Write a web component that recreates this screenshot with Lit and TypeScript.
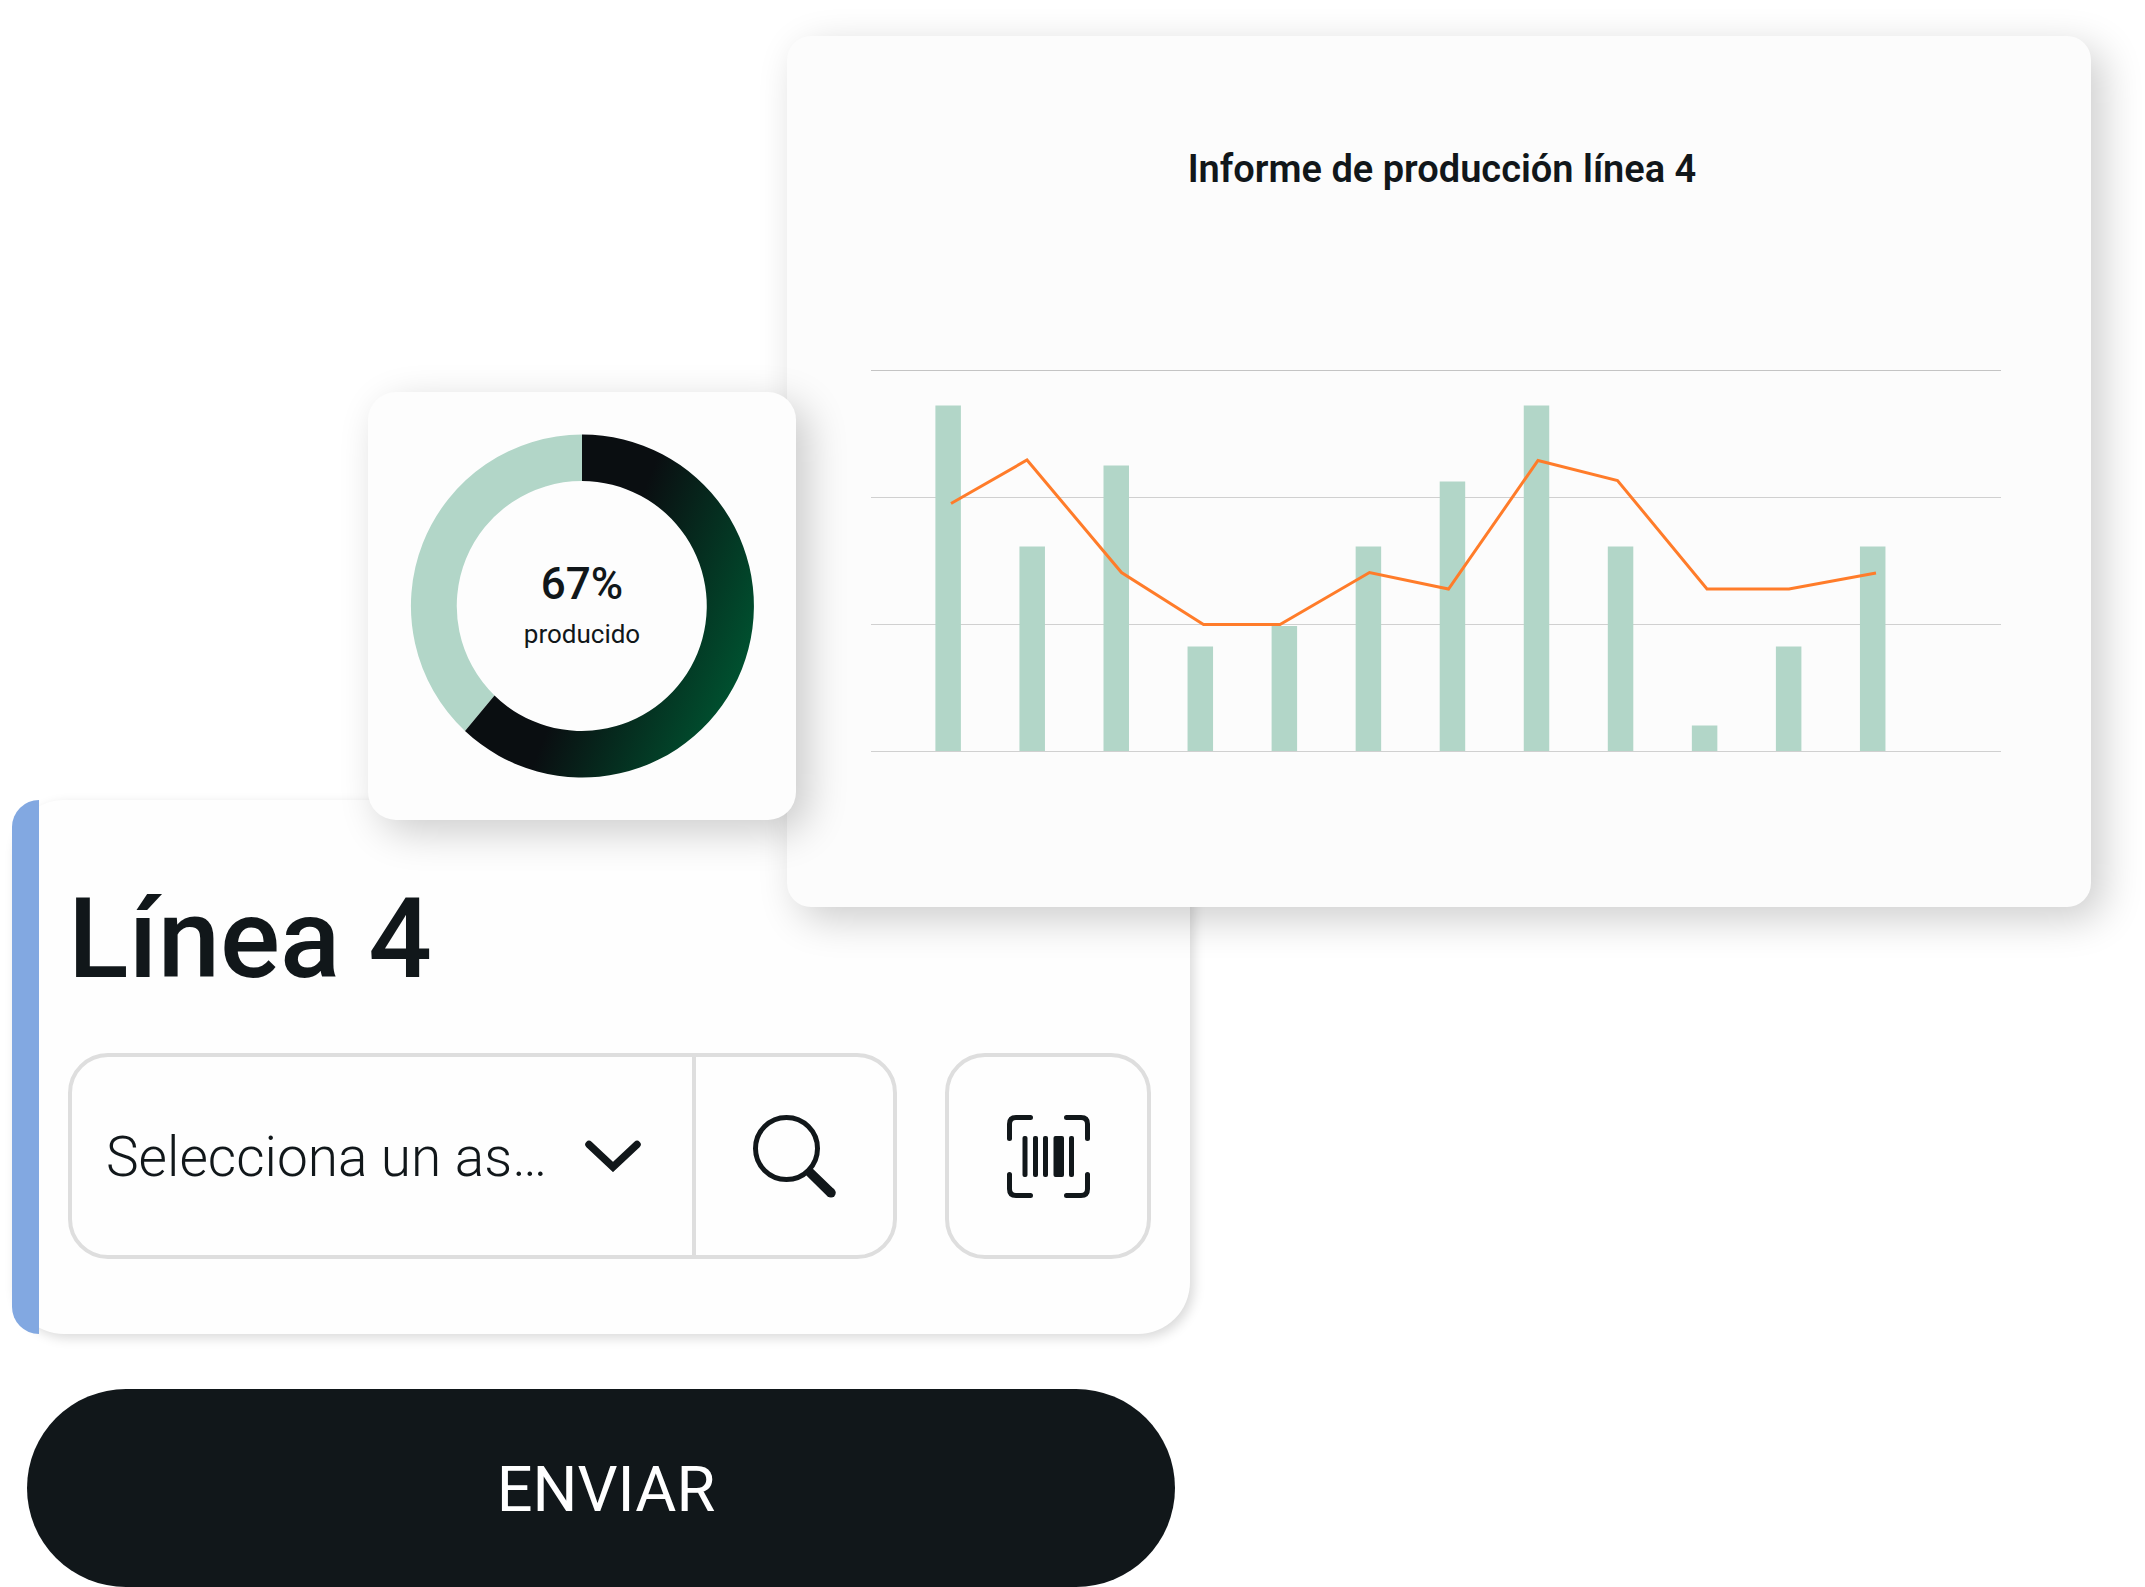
import { LitElement, html, svg, css } from "lit";
import { customElement, property } from "lit/decorators.js";

/** Plot geometry shared by the bars and the trend line, in chart units. */
const PLOT = { width: 1130, base: 381, gridStep: 127, barWidth: 25.5, barStart: 64.4, barStep: 84.05 };

const BAR_HEIGHTS = [345.5, 204.5, 285.5, 104.5, 125, 204.5, 269.5, 345.5, 204.5, 25.5, 104.5, 204.5];

const TREND: Array<[number, number]> = [
  [80, 133.5], [156, 90], [250.5, 202.5], [332.5, 254.5], [409, 254.5], [498.5, 202.5],
  [577.5, 219], [667, 90.5], [746.5, 110.5], [836, 219], [918, 219], [1005, 203],
];

@customElement("production-report")
export class ProductionReport extends LitElement {
  static styles = css`
    :host {
      display: block;
      box-sizing: border-box;
      padding: 111px 90px 154px 84px;
      border-radius: 24px;
      background: #fcfcfc;
      box-shadow: 12px 12px 40px rgba(0, 0, 0, 0.2);
    }
    .title {
      margin: 0 0 179px;
      padding-left: 12px;
      font-size: 38px;
      line-height: 44px;
      font-weight: 600;
      text-align: center;
    }
    .chart {
      display: block;
      width: 100%;
      height: auto;
    }
    .grid { fill: #d0d0d0; }
    .grid-top { fill: #c4c4c4; }
    .bar { fill: #b2d6c8; }
    .trend {
      fill: none;
      stroke: #ff7c2a;
      stroke-width: 3;
    }
  `;

  render() {
    const { width, base, gridStep, barWidth, barStart, barStep } = PLOT;
    return html`
      <h2 class="title">Informe de producción línea 4</h2>
      <svg class="chart" viewBox="0 0 ${width} ${base + 2}" role="img" aria-label="Producción de la línea 4">
        ${[0, 1, 2, 3].map(
          (i) => svg`<rect class=${i === 0 ? "grid-top" : "grid"} x="0" y=${i * gridStep} width=${width} height="1" />`
        )}
        ${BAR_HEIGHTS.map(
          (h, i) => svg`<rect class="bar" x=${barStart + i * barStep} y=${base - h} width=${barWidth} height=${h} />`
        )}
        <polyline class="trend" points=${TREND.map((p) => p.join(",")).join(" ")} />
      </svg>
    `;
  }
}

@customElement("production-gauge")
export class ProductionGauge extends LitElement {
  static styles = css`
    :host {
      display: grid;
      align-items: center;
      border-radius: 28px;
      background: #fdfdfd;
      box-shadow: 12px 12px 40px rgba(0, 0, 0, 0.2);
    }
    .ring,
    .label {
      grid-area: 1 / 1;
    }
    .ring {
      display: block;
      width: 100%;
      height: auto;
    }
    .rest { fill: #b2d6c8; }
    .label {
      display: flex;
      flex-direction: column;
      align-items: center;
      gap: 8px;
      padding-bottom: 4px;
    }
    .value {
      font-size: 44px;
      line-height: 52px;
      font-weight: 500;
    }
    .caption {
      font-size: 26px;
      line-height: 32px;
    }
  `;

  @property() value = "";
  @property() caption = "";

  render() {
    return html`
      <svg class="ring" viewBox="0 0 428 428" aria-hidden="true">
        <defs>
          <linearGradient id="done" gradientUnits="userSpaceOnUse" x1="227" y1="219" x2="373" y2="278">
            <stop offset="0" stop-color="#0a0e11" />
            <stop offset="1" stop-color="#00502f" />
          </linearGradient>
        </defs>
        <path class="rest" d="M214 42.500A171.500 171.500 0 0 0 97 339L126.500 303.500A125 125 0 0 1 214 89Z" />
        <path fill="url(#done)" d="M214 42.500A171.500 171.500 0 1 1 97 339L126.500 303.500A125 125 0 1 0 214 89Z" />
      </svg>
      <div class="label">
        <span class="value">${this.value}</span>
        <span class="caption">${this.caption}</span>
      </div>
    `;
  }
}

@customElement("line-form")
export class LineForm extends LitElement {
  static styles = css`
    :host { display: block; }
    .form {
      display: flex;
      flex-direction: column;
      gap: 55px;
    }
    .panel {
      position: relative;
      padding: 75px 39px 75px 56px;
      border-radius: 52px;
      background: #fefefe;
      box-shadow: 4px 4px 12px rgba(0, 0, 0, 0.15);
    }
    .panel::before {
      content: "";
      position: absolute;
      inset: 0 auto 0 0;
      width: 27px;
      border-radius: 27px 0 0 27px;
      background: #82a8e1;
    }
    .title {
      margin: 0 0 50px;
      font-size: 112px;
      line-height: 128px;
      font-weight: 500;
    }
    .row {
      display: flex;
      gap: 48px;
    }
    .combo,
    .scan {
      box-sizing: border-box;
      height: 206px;
      border: 4px solid #dedede;
      border-radius: 40px;
      background: transparent;
    }
    .combo {
      flex: 1;
      min-width: 0;
      display: flex;
      overflow: hidden;
    }
    .picker {
      flex: 1;
      min-width: 0;
      display: grid;
      align-items: center;
    }
    .select,
    .chevron {
      grid-area: 1 / 1;
    }
    .select {
      appearance: none;
      box-sizing: border-box;
      width: 100%;
      height: 100%;
      min-width: 0;
      padding: 2px 136px 0 34px;
      border: 0;
      background: transparent;
      color: inherit;
      font: inherit;
      font-size: 55px;
      font-weight: 300;
    }
    .chevron {
      justify-self: end;
      width: 56px;
      height: 32px;
      margin-right: 51px;
      pointer-events: none;
    }
    .search,
    .scan {
      display: flex;
      align-items: center;
      justify-content: center;
      padding: 0;
      color: inherit;
    }
    .search {
      width: 201px;
      border: 0;
      border-left: 4px solid #dedede;
      background: transparent;
    }
    .scan { width: 206px; }
    .icon {
      display: block;
      width: 83px;
      height: 83px;
    }
    .send {
      height: 198px;
      margin: 0 15px;
      padding: 2px 0 0 10px;
      border: 0;
      border-radius: 99px;
      background: #11171a;
      color: #fff;
      font: inherit;
      font-size: 63px;
    }
  `;

  render() {
    return html`
      <form class="form" @submit=${(e: Event) => e.preventDefault()}>
        <section class="panel">
          <h1 class="title"><label for="item">Línea 4</label></h1>
          <div class="row">
            <div class="combo">
              <div class="picker">
                <select class="select" id="item">
                  <option>Selecciona un as…</option>
                </select>
                <svg class="chevron" viewBox="0 0 56 32" aria-hidden="true">
                  <path d="M4 4.500L28 27L52 4.500" fill="none" stroke="currentColor" stroke-width="7.500" stroke-linecap="round" />
                </svg>
              </div>
              <button class="search" type="button" aria-label="Buscar">
                <svg class="icon" viewBox="0 0 83 83" aria-hidden="true">
                  <circle cx="33.500" cy="33.500" r="31" fill="none" stroke="currentColor" stroke-width="5" />
                  <path d="M53.500 54L57 57.500L78 78" fill="none" stroke="currentColor" stroke-width="9.500" />
                  <circle cx="78" cy="77.800" r="4.750" fill="currentColor" />
                </svg>
              </button>
            </div>
            <button class="scan" type="button" aria-label="Escanear">
              <svg class="icon" viewBox="0 0 83 83" aria-hidden="true">
                <path
                  d="M2.500 23.500V9Q2.500 2.500 9 2.500H23.500M59.500 2.500H74Q80.500 2.500 80.500 9V23.500M80.500 59.500V74Q80.500 80.500 74 80.500H59.500M23.500 80.500H9Q2.500 80.500 2.500 74V59.500"
                  fill="none" stroke="currentColor" stroke-width="5" stroke-linecap="round"
                />
                <g fill="currentColor">
                  <rect x="15.500" y="21" width="5" height="41" rx="2" />
                  <rect x="26" y="21" width="5" height="41" rx="2" />
                  <rect x="36" y="21" width="5" height="41" rx="2" />
                  <rect x="46.500" y="21" width="10.500" height="41" rx="2" />
                  <rect x="62" y="21" width="5" height="41" rx="2" />
                </g>
              </svg>
            </button>
          </div>
        </section>
        <button class="send" type="submit">ENVIAR</button>
      </form>
    `;
  }
}

@customElement("app-root")
export class AppRoot extends LitElement {
  static styles = css`
    :host {
      display: block;
      background: #fff;
      color: #11171a;
      font-family: Roboto, "Liberation Sans", sans-serif;
    }
    /* The three cards share one grid and overlap through their spans. */
    .board {
      display: grid;
      grid-template-columns:
        minmax(0, 356fr) minmax(0, 419fr) minmax(0, 9fr)
        minmax(0, 394fr) minmax(0, 901fr);
      grid-template-rows: 356px 408px auto;
      align-items: start;
      padding: 36px 54px 0 12px;
      overflow: hidden;
    }
    .form {
      grid-area: 3 / 1 / 4 / 5;
      z-index: 0;
    }
    .report {
      grid-area: 1 / 3 / 4 / 6;
      z-index: 1;
    }
    .gauge {
      grid-area: 2 / 2 / 4 / 4;
      z-index: 2;
    }
  `;

  render() {
    return html`
      <main class="board">
        <line-form class="form"></line-form>
        <production-report class="report"></production-report>
        <production-gauge class="gauge" value="67%" caption="producido"></production-gauge>
      </main>
    `;
  }
}
